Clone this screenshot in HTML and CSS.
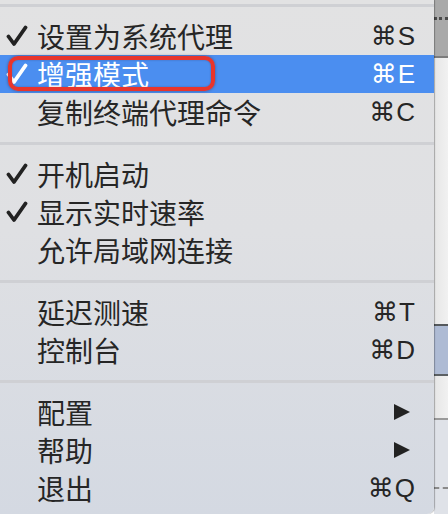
FILE: index.html
```html
<!DOCTYPE html>
<html lang="zh-CN">
<head>
    <meta charset="UTF-8">
    <meta name="viewport" content="width=device-width, initial-scale=1.0">
    <title>菜单</title>
    <link rel="stylesheet" href="styles.css">
</head>
<body>
    <div class="screen">
        <div class="menu">
            <div class="sep sep-top"><div class="line"></div></div>

            <div class="item">
                <span class="check"><svg viewBox="0 0 22 22" width="22" height="22"><path d="M2.5 11.5 L8 19 L19.5 2.5"/></svg></span>
                <span class="label">设置为系统代理</span>
                <span class="key">⌘S</span>
            </div>
            <div class="item active">
                <span class="check"><svg viewBox="0 0 22 22" width="22" height="22"><path d="M2.5 11.5 L8 19 L19.5 2.5"/></svg></span>
                <span class="label">增强模式</span>
                <span class="key">⌘E</span>
                <div class="mark"></div>
            </div>
            <div class="item">
                <span class="check"></span>
                <span class="label">复制终端代理命令</span>
                <span class="key">⌘C</span>
            </div>

            <div class="sep"><div class="line"></div></div>

            <div class="item">
                <span class="check"><svg viewBox="0 0 22 22" width="22" height="22"><path d="M2.5 11.5 L8 19 L19.5 2.5"/></svg></span>
                <span class="label">开机启动</span>
            </div>
            <div class="item">
                <span class="check"><svg viewBox="0 0 22 22" width="22" height="22"><path d="M2.5 11.5 L8 19 L19.5 2.5"/></svg></span>
                <span class="label">显示实时速率</span>
            </div>
            <div class="item">
                <span class="check"></span>
                <span class="label">允许局域网连接</span>
            </div>

            <div class="sep"><div class="line"></div></div>

            <div class="item">
                <span class="check"></span>
                <span class="label">延迟测速</span>
                <span class="key">⌘T</span>
            </div>
            <div class="item">
                <span class="check"></span>
                <span class="label">控制台</span>
                <span class="key">⌘D</span>
            </div>

            <div class="sep"><div class="line"></div></div>

            <div class="item">
                <span class="check"></span>
                <span class="label">配置</span>
                <span class="arrow"><svg viewBox="0 0 18 16" width="18" height="16"><path d="M1 0 L17 8 L1 16 Z"/></svg></span>
            </div>
            <div class="item">
                <span class="check"></span>
                <span class="label">帮助</span>
                <span class="arrow"><svg viewBox="0 0 18 16" width="18" height="16"><path d="M1 0 L17 8 L1 16 Z"/></svg></span>
            </div>
            <div class="item">
                <span class="check"></span>
                <span class="label">退出</span>
                <span class="key">⌘Q</span>
            </div>
        </div>

        <div class="behind">
            <div class="toolbar"><div class="dots"></div></div>
            <div class="pane"></div>
            <div class="selected"></div>
            <div class="pane short"></div>
            <div class="lower"><div class="dash"></div></div>
        </div>
    </div>
</body>
</html>
```

FILE: styles.css
```css
/* menu screenshot */
html, body {
    margin: 0;
    padding: 0;
}

body {
    width: 448px;
    height: 514px;
    overflow: hidden;
    font-family: "Liberation Sans", "Noto Sans CJK SC", sans-serif;
    color: #262626;
}

.screen {
    display: flex;
    height: 514px;
}

.menu {
    width: 434px;
    flex-shrink: 0;
    height: 514px;
    background: linear-gradient(180deg, #e2e2e3 0%, #dfe0e3 45%, #d4d9e2 100%);
    border-bottom-right-radius: 7px;
    box-shadow: 1px 0 1px rgba(0, 0, 0, 0.28);
    position: relative;
    z-index: 1;
}

.sep {
    padding: 11px 0 10px;
}

.sep-top {
    padding: 4px 0 10px;
}

.sep .line {
    height: 3px;
    background: #cfd0d4;
}

.item {
    display: flex;
    align-items: center;
    height: 38px;
    padding: 0 18px 0 6px;
    position: relative;
}

.item.active {
    background: #4b8ef0;
    color: #fff;
}

.check {
    width: 31px;
    flex-shrink: 0;
    display: flex;
    align-items: center;
}

.check svg path {
    fill: none;
    stroke: #222;
    stroke-width: 3.8;
    stroke-linecap: round;
    stroke-linejoin: round;
}

.active .check svg path {
    stroke: #fff;
}

.label {
    flex: 1;
    font-family: "Noto Sans CJK SC", sans-serif;
    font-size: 28px;
    line-height: 38px;
}

.key {
    font-size: 26px;
    line-height: 38px;
    letter-spacing: 1px;
}

.key::first-letter {
    font-family: "DejaVu Sans", sans-serif;
}

.arrow {
    display: flex;
    align-items: center;
    padding-right: 5px;
}

.arrow svg path {
    fill: #222;
}

.mark {
    position: absolute;
    left: 8px;
    top: 1px;
    width: 199px;
    height: 27px;
    border: 4px solid #e8352c;
    border-radius: 10px;
    box-shadow: 0 0 3px rgba(60, 0, 0, 0.45), inset 0 0 2px rgba(60, 0, 0, 0.3);
}

.behind {
    flex: 1;
    display: flex;
    flex-direction: column;
}

.toolbar {
    height: 56px;
    background: #a9a9a9;
    border-bottom: 2px solid #7c7c7c;
}

.dots {
    margin-top: 17px;
    border-top: 3px dotted #4a4a4a;
}

.pane {
    height: 266px;
    background: linear-gradient(90deg, #e6e6e6, #f1f1f1);
}

.pane.short {
    height: 42px;
    border-bottom: 2px solid #9a9a9a;
}

.selected {
    height: 48px;
    background: #aebbd4;
    border-top: 2px solid #55595c;
    border-bottom: 2px solid #5b6063;
}

.lower {
    flex: 1;
    background: #dfe2e8;
}

.dash {
    margin-top: 67px;
    border-top: 2px dashed #8a8a8a;
}
```
